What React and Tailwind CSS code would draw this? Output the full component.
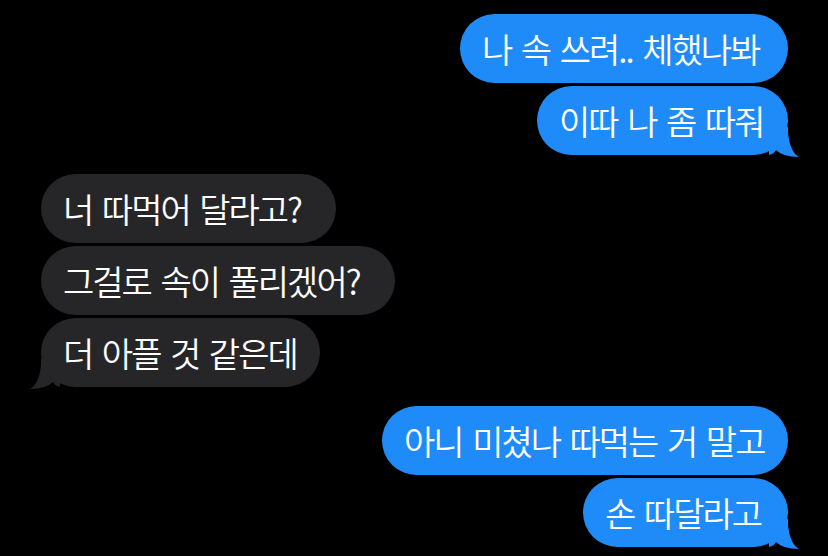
import React from "react";

const groups = [
  {
    me: true,
    items: [
      { text: "나 속 쓰려.. 체했나봐", w: "w-[328px]" },
      { text: "이따 나 좀 따줘", w: "w-[251px]" },
    ],
  },
  {
    me: false,
    items: [
      { text: "너 따먹어 달라고?", w: "w-[295px]" },
      { text: "그걸로 속이 풀리겠어?", w: "w-[354px]" },
      { text: "더 아플 것 같은데", w: "w-[279px]" },
    ],
  },
  {
    me: true,
    items: [
      { text: "아니 미쳤나 따먹는 거 말고", w: "w-[406px]" },
      { text: "손 따달라고", w: "w-[205px]" },
    ],
  },
];

function Tail({ me }) {
  return (
    <svg
      viewBox="0 0 30 30"
      width="30"
      height="30"
      className={
        me
          ? "absolute right-[-11px] bottom-[-2px]"
          : "absolute left-[-11px] bottom-[-2px] -scale-x-100"
      }
    >
      <path
        d="M0 0 L19 0 L19 6 Q21 25 30 30 Q14 30 7 23 Q5 27 0 28 Z"
        fill={me ? "#1f8bf9" : "#262628"}
      />
    </svg>
  );
}

export default function App() {
  return (
    <div
      className="w-[828px] h-[556px] bg-black overflow-hidden pt-[14px] flex flex-col gap-[19px]"
      style={{ fontFamily: '"Noto Sans CJK KR", "Noto Sans", sans-serif' }}
    >
      {groups.map((g, gi) => (
        <div
          key={gi}
          className={
            g.me
              ? "flex flex-col items-end gap-[3px] pr-[40px]"
              : "flex flex-col items-start gap-[3px] pl-[41px]"
          }
        >
          {g.items.map((m, i) => (
            <div
              key={i}
              className={
                "relative h-[69px] rounded-full flex items-center pl-[22px] text-white text-[34px] font-[350] tracking-[-2px] [word-spacing:4px] whitespace-nowrap " +
                m.w +
                (g.me ? " bg-[#1f8bf9]" : " bg-[#262628]")
              }
            >
              <span className="relative">{m.text}</span>
              {i === g.items.length - 1 && <Tail me={g.me} />}
            </div>
          ))}
        </div>
      ))}
    </div>
  );
}
